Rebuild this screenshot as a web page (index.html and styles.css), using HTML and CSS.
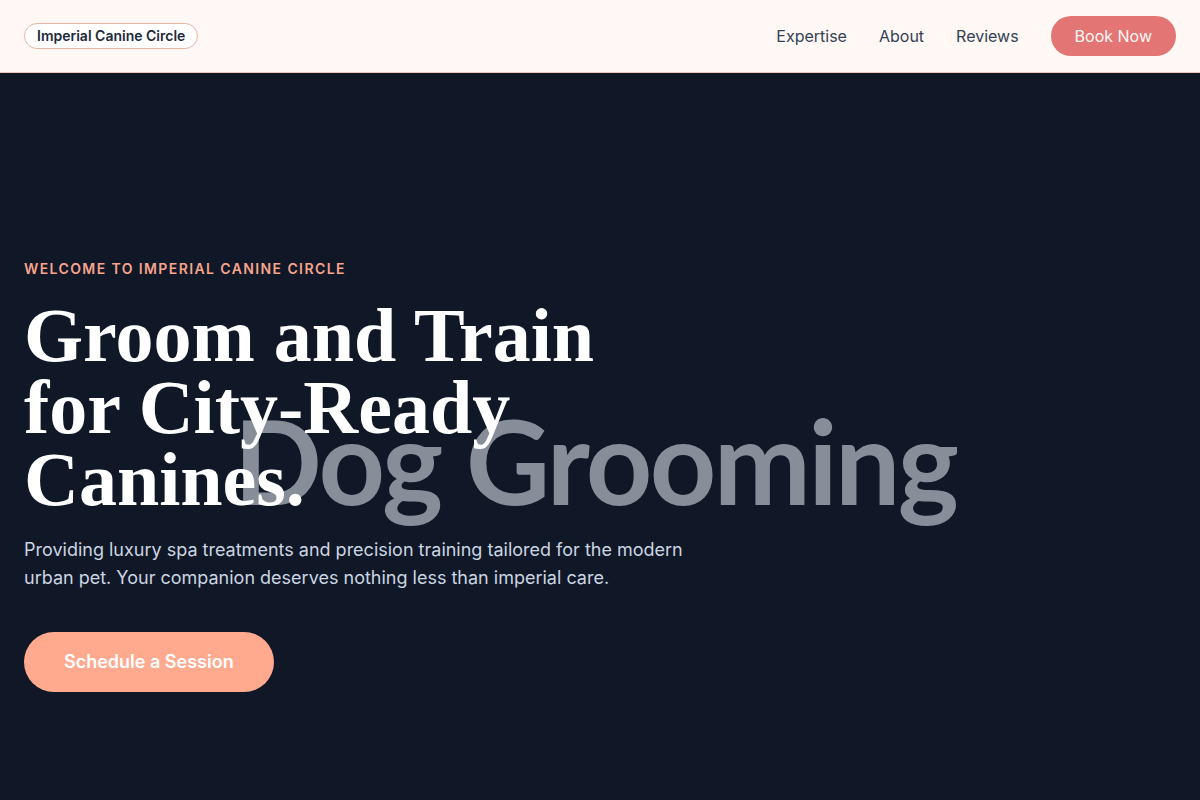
FILE: index.html
```html
<!DOCTYPE html>
<html lang="en">
<head>
<meta charset="utf-8">
<title>Imperial Canine Circle</title>
<link rel="stylesheet" href="styles.css">
</head>
<body>
<header class="nav">
  <a class="brand" href="#">Imperial Canine Circle</a>
  <nav class="links">
    <a href="#">Expertise</a>
    <a href="#">About</a>
    <a href="#">Reviews</a>
    <a class="book" href="#">Book Now</a>
  </nav>
</header>
<main class="hero">
  <div class="backdrop" aria-hidden="true">Dog Grooming</div>
  <div class="content">
    <p class="eyebrow">Welcome to Imperial Canine Circle</p>
    <h1 class="title">Groom and Train for City-Ready Canines.</h1>
    <p class="lead">Providing luxury spa treatments and precision training tailored for the modern urban pet. Your companion deserves nothing less than imperial care.</p>
    <a class="cta" href="#">Schedule a Session</a>
  </div>
</main>
</body>
</html>
```

FILE: styles.css
```css
* { box-sizing: border-box; }
html, body { margin: 0; padding: 0; }
body {
  font-family: Inter, "Noto Sans", sans-serif;
  background: #101828;
  height: 800px;
  overflow: hidden;
}
a { text-decoration: none; }

.nav {
  height: 73px;
  background: #fff8f5;
  border-bottom: 1px solid #efc6ba;
  display: flex;
  align-items: center;
  justify-content: space-between;
  padding: 0 24px;
}
.brand {
  display: inline-block;
  font-size: 14px;
  font-weight: 600;
  line-height: 18px;
  color: #1e293b;
  background: #ffffff;
  border: 1px solid #eab4a2;
  border-radius: 999px;
  padding: 3px 12px;
}
.links {
  display: flex;
  align-items: center;
  gap: 32px;
}
.links a {
  font-size: 16px;
  line-height: 24px;
  color: #334155;
}
.links a.book {
  background: #e37574;
  color: #fff8f5;
  border-radius: 999px;
  padding: 8px 24px;
}

.hero {
  position: relative;
  height: 727px;
  background: #101828;
  padding: 186px 24px 0;
}
.backdrop {
  position: absolute;
  left: 0;
  right: 10px;
  top: 318px;
  text-align: center;
  font-family: Lato, "Open Sans", sans-serif;
  font-weight: 700;
  font-size: 116px;
  line-height: 140px;
  letter-spacing: -0.023em;
  color: #878d99;
  white-space: nowrap;
  z-index: 0;
}
.content {
  position: relative;
  z-index: 1;
  max-width: 672px;
}
.eyebrow {
  margin: 0 0 20px;
  font-size: 14px;
  line-height: 20px;
  font-weight: 600;
  letter-spacing: 0.1em;
  text-transform: uppercase;
  color: #f6a48b;
}
.title {
  margin: 0 0 21px;
  max-width: 640px;
  font-family: "Liberation Serif", "DejaVu Serif", serif;
  font-weight: 700;
  font-size: 76px;
  line-height: 72px;
  color: #ffffff;
}
.lead {
  margin: 0 0 40px;
  font-size: 18px;
  line-height: 28px;
  color: #cbd5e1;
}
.cta {
  display: inline-block;
  background: #ffaa8f;
  color: #ffffff;
  font-size: 18px;
  line-height: 28px;
  font-weight: 600;
  padding: 16px 40px;
  border-radius: 999px;
}
```
